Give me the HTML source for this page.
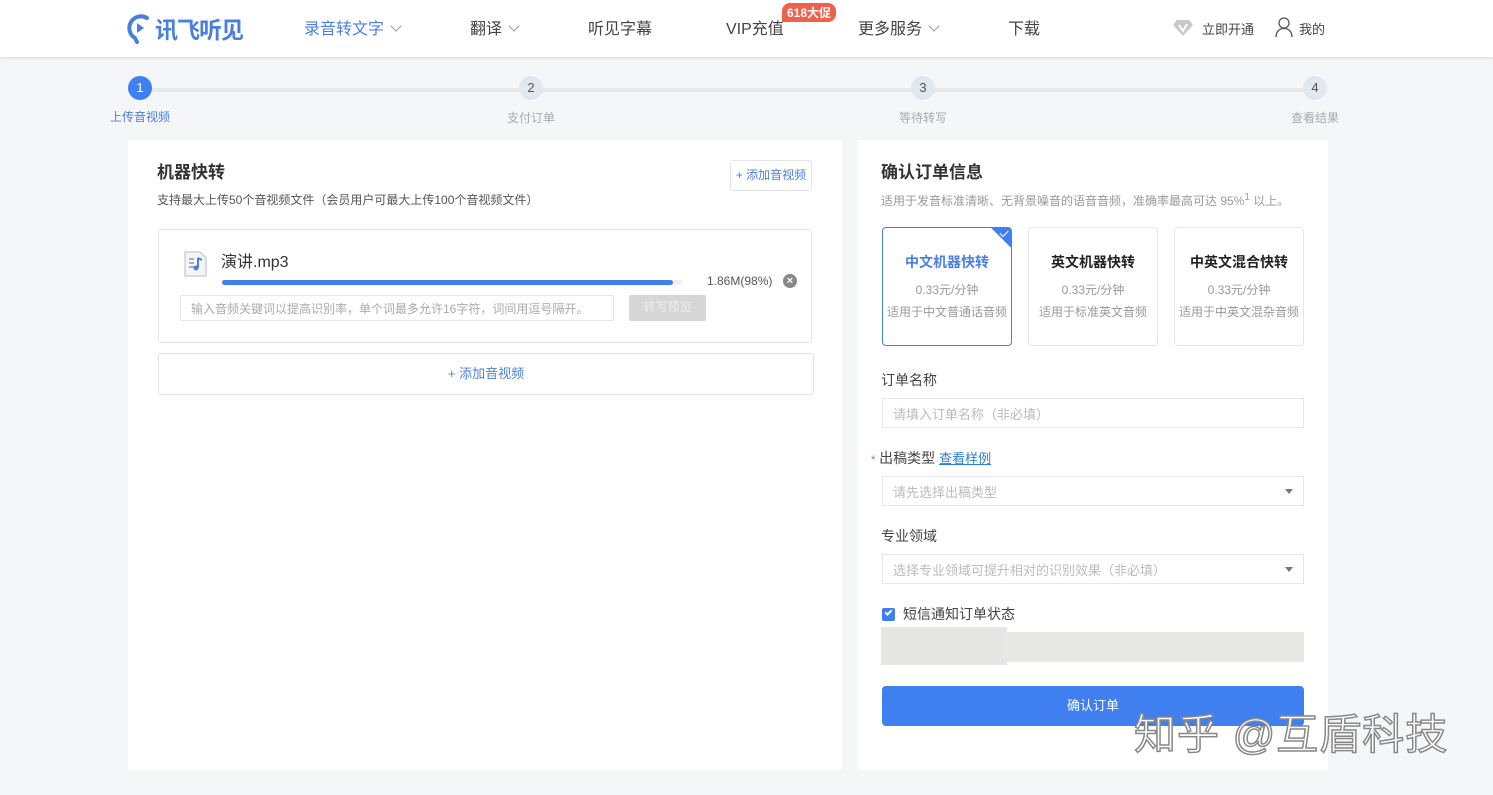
<!DOCTYPE html>
<html><head><meta charset="utf-8"><style>
*{box-sizing:border-box;margin:0;padding:0}
body{width:1493px;height:795px;background:#f5f6f8;font-family:"Liberation Sans","Noto Sans CJK SC",sans-serif;position:relative;overflow:hidden;color:#333}
.a{position:absolute;white-space:nowrap}
.hdr{position:absolute;left:0;top:0;width:1493px;height:57px;background:#fff;box-shadow:0 1px 3px rgba(0,0,0,.12)}
.nav{font-size:16px;color:#444;top:15px}
.chev{display:inline-block;width:8px;height:8px;border-right:1px solid #999;border-bottom:1px solid #999;transform:rotate(45deg);margin-left:8px;position:relative;top:-4px}
.step{width:24px;height:24px;border-radius:12px;background:#e3e8ef;color:#555;font-size:13px;text-align:center;line-height:24px}
.sl{font-size:12px;color:#aaa}
.panel{position:absolute;background:#fff}
.box{position:absolute;border:1px solid #e1e4e8;border-radius:3px;background:#fff}
.card{position:absolute;top:227px;width:130px;height:119px;border:1px solid #e3e6ea;border-radius:4px;text-align:center}
.card b{display:block;margin-top:24px;font-size:14px;color:#222}
.card p{font-size:12px;color:#999;margin-top:12px;line-height:12px}
.card p+p{margin-top:10px}
.inp{position:absolute;left:882px;width:422px;height:30px;border:1px solid #e3e6ea;font-size:13px;color:#bbb;padding:5px 10px}
.lbl{font-size:14px;color:#444}
.tri{position:absolute;right:10px;top:12px;border:4px solid transparent;border-top:5px solid #777}
</style></head><body>
<div class="hdr"></div>
<svg class="a" style="left:127px;top:12px" width="26" height="32" viewBox="0 0 26 32"><path d="M20 6 A10 10 0 1 0 8 26 L10 30" fill="none" stroke="#4a7fe0" stroke-width="4" stroke-linecap="round"/><path d="M10 11 L17 16 L10 21Z" fill="#4a7fe0"/></svg>
<div class="a" style="left:155px;top:11px;font-size:23px;font-weight:bold;color:#4a7fe0;letter-spacing:-1px">讯飞听见</div>
<div class="a nav" style="left:304px;color:#4a7fe0">录音转文字<span class="chev"></span></div>
<div class="a nav" style="left:470px">翻译<span class="chev"></span></div>
<div class="a nav" style="left:588px">听见字幕</div>
<div class="a nav" style="left:726px">VIP充值</div>
<div class="a" style="left:782px;top:3px;background:#f0614d;color:#fff;font-size:12px;font-weight:bold;padding:1px 5px;border-radius:8px 8px 8px 0">618大促</div>
<div class="a nav" style="left:858px">更多服务<span class="chev"></span></div>
<div class="a nav" style="left:1008px">下载</div>
<svg class="a" style="left:1172px;top:19px" width="22" height="18" viewBox="0 0 22 18"><path d="M5 1H17L21 6L11 17L1 6Z" fill="#c9c9c9"/><path d="M7 6L11 12L15 5" fill="none" stroke="#fff" stroke-width="2"/></svg>
<div class="a" style="left:1202px;top:19px;font-size:13px;color:#444">立即开通</div>
<svg class="a" style="left:1275px;top:17px" width="18" height="20" viewBox="0 0 18 20"><circle cx="9" cy="6" r="5" fill="none" stroke="#555" stroke-width="1.3"/><path d="M1 20C1 14 5 11.5 9 11.5S17 14 17 20" fill="none" stroke="#555" stroke-width="1.3"/></svg>
<div class="a" style="left:1299px;top:19px;font-size:13px;color:#444">我的</div>

<div class="a" style="left:140px;top:88px;width:1176px;height:4px;background:#e5e9ee"></div>
<div class="a step" style="left:128px;top:76px;background:#3f7ff0;color:#fff">1</div>
<div class="a step" style="left:519px;top:76px">2</div>
<div class="a step" style="left:911px;top:76px">3</div>
<div class="a step" style="left:1303px;top:76px">4</div>
<div class="a sl" style="left:110px;top:108px;color:#4a7fe0">上传音视频</div>
<div class="a sl" style="left:507px;top:109px">支付订单</div>
<div class="a sl" style="left:899px;top:109px">等待转写</div>
<div class="a sl" style="left:1291px;top:109px">查看结果</div>

<div class="panel" style="left:128px;top:140px;width:714px;height:630px"></div>
<div class="a" style="left:157px;top:158px;font-size:17px;font-weight:bold;color:#333">机器快转</div>
<div class="a" style="left:157px;top:191px;font-size:12px;color:#555">支持最大上传50个音视频文件（会员用户可最大上传100个音视频文件）</div>
<div class="box" style="left:730px;top:160px;width:82px;height:31px;font-size:12px;color:#4a7fe0;text-align:center;line-height:29px">+ 添加音视频</div>
<div class="box" style="left:158px;top:229px;width:654px;height:114px"></div>
<svg class="a" style="left:183px;top:250px" width="26" height="28" viewBox="0 0 26 28"><path d="M2 2H17L23 8V26H2Z" fill="#f4f5f7" stroke="#bbb"/><path d="M6 9H11M6 13H11M6 17H11" stroke="#8899bb" stroke-width="1.5"/><path d="M15 8V18" stroke="#4a7fe0" stroke-width="2"/><circle cx="13" cy="18" r="2.5" fill="#4a7fe0"/><path d="M15 8L19 10" stroke="#4a7fe0" stroke-width="2"/></svg>
<div class="a" style="left:221px;top:248px;font-size:16px;color:#333">演讲.mp3</div>
<div class="a" style="left:222px;top:280px;width:460px;height:5px;border-radius:3px;background:#eef0f3"></div>
<div class="a" style="left:222px;top:280px;width:451px;height:5px;border-radius:3px;background:#3f7ff0"></div>
<div class="a" style="left:707px;top:274px;font-size:12px;color:#555">1.86M(98%)</div>
<div class="a" style="left:783px;top:274px;width:14px;height:14px;border-radius:7px;background:#888;color:#fff;font-size:11px;line-height:14px;text-align:center;font-weight:bold">×</div>
<div class="a" style="left:180px;top:295px;width:434px;height:26px;border:1px solid #e1e4e8;border-radius:2px;font-size:12px;color:#aaa;padding:4px 10px">输入音频关键词以提高识别率，单个词最多允许16字符，词间用逗号隔开。</div>
<div class="a" style="left:629px;top:295px;width:77px;height:26px;background:#d6d6d6;border-radius:2px;color:#eee;font-size:12px;text-align:center;line-height:25px">转写预览</div>
<div class="box" style="left:158px;top:353px;width:656px;height:42px;font-size:13px;color:#4a7fe0;text-align:center;line-height:39px">+ 添加音视频</div>

<div class="panel" style="left:858px;top:140px;width:470px;height:630px"></div>
<div class="a" style="left:881px;top:158px;font-size:17px;font-weight:bold;color:#333">确认订单信息</div>
<div class="a" style="left:881px;top:192px;font-size:12px;color:#999">适用于发音标准清晰、无背景噪音的语音音频，准确率最高可达 95%<sup>1</sup> 以上。</div>
<div class="card" style="left:882px;border-color:#4a7fe0;overflow:hidden"><b style="color:#4a7fe0">中文机器快转</b><p>0.33元/分钟</p><p>适用于中文普通话音频</p>
<div style="position:absolute;right:-14px;top:-14px;width:28px;height:28px;background:#3f7ff0;transform:rotate(45deg)"></div><div style="position:absolute;right:3px;top:2px;width:8px;height:5px;border-left:1.5px solid #fff;border-bottom:1.5px solid #fff;transform:rotate(-45deg)"></div></div>
<div class="card" style="left:1028px"><b>英文机器快转</b><p>0.33元/分钟</p><p>适用于标准英文音频</p></div>
<div class="card" style="left:1174px"><b>中英文混合快转</b><p>0.33元/分钟</p><p>适用于中英文混杂音频</p></div>
<div class="a lbl" style="left:881px;top:370px">订单名称</div>
<div class="inp" style="top:398px">请填入订单名称（非必填）</div>
<div class="a lbl" style="left:871px;top:448px"><span style="color:#e55;font-size:11px">*</span> 出稿类型 <span style="color:#2a7fd4;text-decoration:underline;font-size:13px">查看样例</span></div>
<div class="inp" style="top:476px">请先选择出稿类型<i class="tri"></i></div>
<div class="a lbl" style="left:881px;top:526px">专业领域</div>
<div class="inp" style="top:554px">选择专业领域可提升相对的识别效果（非必填）<i class="tri"></i></div>
<div class="a" style="left:882px;top:608px;width:13px;height:13px;background:#3f7ff0;border-radius:2px"></div>
<div class="a" style="left:885px;top:610px;width:7px;height:4px;border-left:2px solid #fff;border-bottom:2px solid #fff;transform:rotate(-45deg)"></div>
<div class="a lbl" style="left:903px;top:604px">短信通知订单状态</div>
<div class="a" style="left:881px;top:632px;width:423px;height:30px;background:#e8e8e4"></div>
<div class="a" style="left:881px;top:627px;width:126px;height:38px;background:#e6e6e4"></div>
<div class="a" style="left:882px;top:686px;width:422px;height:40px;background:#3f7ff0;border-radius:4px;color:#fff;font-size:13px;text-align:center;line-height:40px">确认订单</div>
<div class="a" style="left:1134px;top:701px;font-size:42px;color:#fff;-webkit-text-stroke:1.5px #888;letter-spacing:1px">知乎 @互盾科技</div>
</body></html>
